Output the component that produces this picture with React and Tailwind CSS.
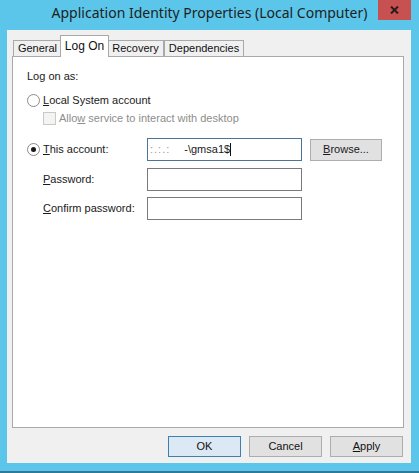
const Radio = ({ checked }) => (
  <span className="w-[13px] h-[13px] rounded-full border border-[#8a8a8a] bg-white flex items-center justify-center shrink-0">
    {checked && <span className="w-[5px] h-[5px] rounded-full bg-[#1a1a1a]" />}
  </span>
);

const Tab = ({ label, width, active }) =>
  active ? (
    <div
      className="h-[22px] -mb-px -mx-[2px] relative z-10 bg-white border border-b-0 border-[#a9a9a9] flex items-center justify-center text-[12px] text-[#111]"
      style={{ width: width + 4 }}
    >
      {label}
    </div>
  ) : (
    <div
      className="h-[16px] bg-[#f0f0f0] border border-b-0 border-[#a9a9a9] flex items-center justify-center text-[#111]"
      style={{ width }}
    >
      {label}
    </div>
  );

const Field = ({ children, blue }) => (
  <div
    className={`w-[155px] h-[23px] bg-white border flex items-center px-[2px] ${
      blue ? 'border-[#4a7598]' : 'border-[#7a7a7a]'
    }`}
  >
    {children}
  </div>
);

const Btn = ({ children, primary }) => (
  <div
    className={`w-[73px] h-[21px] border flex items-center justify-center text-[#111] ${
      primary ? 'bg-[#dce8f4] border-[#3c7fb1]' : 'bg-[#e1e1e1] border-[#adadad]'
    }`}
  >
    {children}
  </div>
);

export default function App() {
  return (
    <div
      className="w-[419px] h-[473px] bg-[#5bc6ea] flex flex-col border-b-2 border-[#2f7a98] text-[11px] leading-[13px] text-[#1a1a1a]"
      style={{ fontFamily: '"Liberation Sans", Arial, sans-serif' }}
    >
      <div className="relative h-[30px] flex items-center justify-center shrink-0">
        <span
          className="text-[14px] leading-[20px] text-[#1e1e1e] -mt-[4px]"
          style={{ fontFamily: '"Noto Sans", "Open Sans", sans-serif' }}
        >
          Application Identity Properties (Local Computer)
        </span>
        <div className="absolute right-[8px] top-0 w-[33px] h-[20px] bg-[#c75050] flex items-center justify-center">
          <svg width="9" height="8" viewBox="0 0 9 8">
            <path d="M1 0.5 L8 7.5 M8 0.5 L1 7.5" stroke="#2a1a1a" strokeWidth="2" />
          </svg>
        </div>
      </div>

      <div className="ml-[7px] mr-[8px] mb-[8px] flex-1 bg-[#f0f0f0] flex flex-col pl-[5px] pr-[7px] pt-[5px] pb-[6px]">
        <div className="flex items-end h-[21px] pl-[1px]">
          <Tab label="General" width={49} />
          <Tab label="Log On" width={45} active />
          <Tab label="Recovery" width={57} />
          <Tab label="Dependencies" width={80} />
        </div>

        <div className="flex-1 bg-white border border-[#a9a9a9] pl-[14px] pt-[13px]">
          <div>Log on as:</div>

          <div className="flex items-center gap-[3px] mt-[11px]">
            <Radio />
            <span>
              <span className="underline">L</span>ocal System account
            </span>
          </div>

          <div className="flex items-center gap-[3px] mt-[5px] pl-[16px] text-[#8d8d8d]">
            <span className="w-[13px] h-[13px] border border-[#c9c9c9] bg-[#f4f4f4] shrink-0" />
            <span>
              Allo<span className="underline">w</span> service to interact with desktop
            </span>
          </div>

          <div className="flex items-center mt-[13px]">
            <div className="w-[120px] flex items-center gap-[3px]">
              <Radio checked />
              <span>
                <span className="underline">T</span>his account:
              </span>
            </div>
            <Field blue>
              <span className="text-[#9a9a9a] tracking-[1px]">:.:.:</span>
              <span className="ml-[14px]">-\gmsa1$</span>
              <span className="w-px h-[13px] bg-[#111]" />
            </Field>
            <div className="ml-[8px] w-[72px] h-[22px] bg-[#e1e1e1] border border-[#adadad] flex items-center justify-center">
              <span>
                <span className="underline">B</span>rowse...
              </span>
            </div>
          </div>

          <div className="flex items-center mt-[7px]">
            <div className="w-[120px] pl-[16px]">
              <span className="underline">P</span>assword:
            </div>
            <Field />
          </div>

          <div className="flex items-center mt-[6px]">
            <div className="w-[120px] pl-[16px]">
              <span className="underline">C</span>onfirm password:
            </div>
            <Field />
          </div>
        </div>

        <div className="flex justify-end gap-[8px] mt-[8px] pr-[1px]">
          <Btn primary>OK</Btn>
          <Btn>Cancel</Btn>
          <Btn>
            <span>
              <span className="underline">A</span>pply
            </span>
          </Btn>
        </div>
      </div>
    </div>
  );
}
